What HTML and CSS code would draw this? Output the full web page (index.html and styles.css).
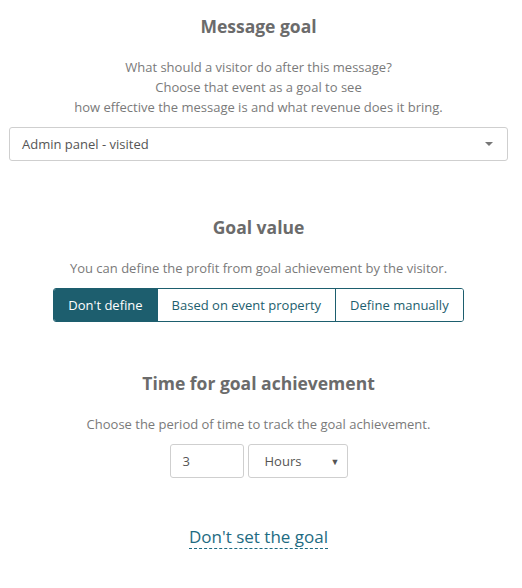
FILE: index.html
```html
<!DOCTYPE html>
<html>
<head>
<meta charset="utf-8">
<link rel="stylesheet" href="styles.css">
</head>
<body>
<div class="page">
  <section class="sec sec-first">
    <h2 class="title">Message goal</h2>
    <p class="desc">What should a visitor do after this message?<br>Choose that event as a goal to see<br>how effective the message is and what revenue does it bring.</p>
    <div class="select-wide">
      <span>Admin panel - visited</span>
      <span class="caret"></span>
    </div>
  </section>
  <section class="sec sec-second">
    <h2 class="title">Goal value</h2>
    <p class="desc">You can define the profit from goal achievement by the visitor.</p>
    <div class="btn-group">
      <div class="btn active">Don't define</div>
      <div class="btn">Based on event property</div>
      <div class="btn">Define manually</div>
    </div>
  </section>
  <section class="sec sec-third">
    <h2 class="title">Time for goal achievement</h2>
    <p class="desc">Choose the period of time to track the goal achievement.</p>
    <div class="time-row">
      <div class="num-input">3</div>
      <div class="unit-select"><span>Hours</span><span class="tri">▼</span></div>
    </div>
  </section>
  <div class="link-row"><span class="link">Don't set the goal</span></div>
</div>
</body>
</html>
```
FILE: styles.css
```css
html, body { margin: 0; padding: 0; background: #fff; }
body { font-family: "Open Sans", "Noto Sans", sans-serif; color: #777; }
.page { width: 499px; margin-left: 9px; }
.sec { display: flex; flex-direction: column; align-items: center; }
.sec-first { padding-top: 14px; }
.sec-second { padding-top: 54px; }
.sec-third { padding-top: 49px; }
.title { margin: 0; font-size: 17.5px; line-height: 24px; font-weight: 700; color: #6b6b6b; }
.desc { margin: 19px 0 10px; font-size: 13px; line-height: 20px; text-align: center; color: #7a7a7a; }
.select-wide { align-self: stretch; box-sizing: border-box; height: 34px; border: 1px solid #cfcfcf; border-radius: 3px; display: flex; align-items: center; justify-content: space-between; padding: 0 14px 0 12px; font-size: 13px; color: #555; }
.caret { width: 0; height: 0; border-left: 4px solid transparent; border-right: 4px solid transparent; border-top: 4px solid #777; }
.btn-group { display: flex; height: 34px; border: 1px solid #1d5e6e; border-radius: 3px; overflow: hidden; box-sizing: border-box; }
.btn { display: flex; align-items: center; padding: 0 14px; font-size: 13px; color: #1d5e6e; background: #fff; }
.btn + .btn { border-left: 1px solid #1d5e6e; }
.btn.active { background: #1d5e6e; color: #fff; }
.time-row { display: flex; gap: 4px; }
.num-input { box-sizing: border-box; width: 74px; height: 34px; border: 1px solid #cfcfcf; border-radius: 3px; display: flex; align-items: center; padding-left: 12px; font-size: 13px; color: #555; }
.unit-select { box-sizing: border-box; width: 100px; height: 34px; border: 1px solid #cfcfcf; border-radius: 3px; display: flex; align-items: center; justify-content: space-between; padding: 0 7px 0 16px; font-size: 13px; color: #555; }
.tri { font-size: 9px; color: #555; }
.link-row { display: flex; justify-content: center; padding-top: 48px; }
.link { font-size: 17px; line-height: 22px; color: #1d6b82; border-bottom: 1px dashed #1d6b82; }
```
